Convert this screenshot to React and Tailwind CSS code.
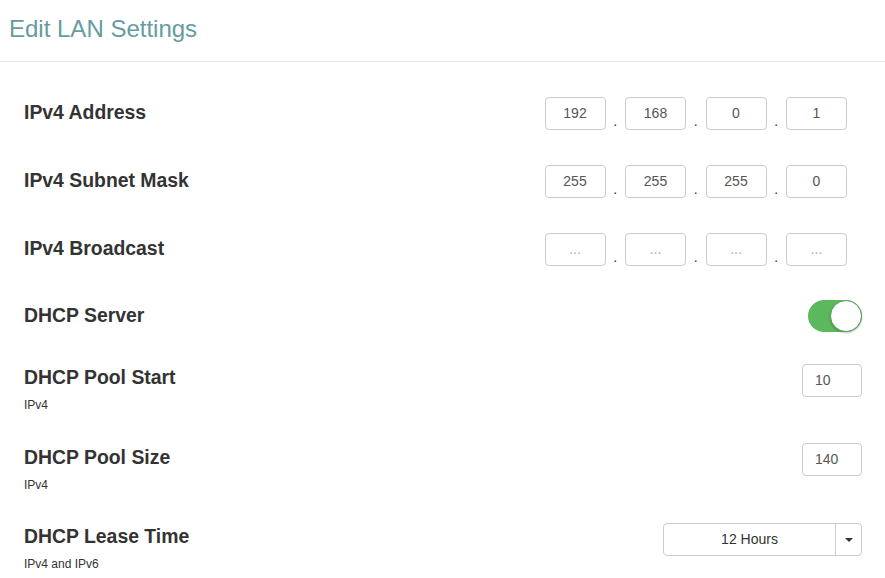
import React from 'react';

const font = { fontFamily: '"Liberation Sans", Arial, sans-serif' };

function Octets({ values, placeholder = false }) {
    return (
        <div className="flex items-end mr-[15px]">
            {values.map((v, i) => (
                <React.Fragment key={i}>
                    {i > 0 && (
                        <span className="w-[19.5px] text-center text-[14px] leading-[14px] text-[#333] pb-[2px]">.</span>
                    )}
                    <div
                        className={
                            'w-[61px] h-[33px] border border-[#ccc] rounded-[4px] flex items-center justify-center text-[14px] ' +
                            (placeholder ? 'text-[#aaa]' : 'text-[#555]')
                        }
                    >
                        {v}
                    </div>
                </React.Fragment>
            ))}
        </div>
    );
}

function Label({ title, sub, top = 4 }) {
    return (
        <div style={{ paddingTop: top }}>
            <div className="text-[19.4px] leading-[23px] font-bold text-[#333]">{title}</div>
            {sub && <div className="text-[12px] leading-[14px] text-[#333] mt-[9px]">{sub}</div>}
        </div>
    );
}

export default function App() {
    return (
        <div className="w-[885px] h-[578px] bg-white overflow-hidden" style={font}>
            <div className="h-[62px] border-b border-[#e5e5e5] px-[9px] pt-[14px]">
                <h2 className="text-[24px] leading-[29px] text-[#659c9e]">Edit LAN Settings</h2>
            </div>

            <div className="pl-6 pr-[23px] pt-[35px]">
                <div className="h-[68px] flex justify-between items-start">
                    <Label title="IPv4 Address" />
                    <Octets values={['192', '168', '0', '1']} />
                </div>
                <div className="h-[68px] flex justify-between items-start">
                    <Label title="IPv4 Subnet Mask" />
                    <Octets values={['255', '255', '255', '0']} />
                </div>
                <div className="h-[67px] flex justify-between items-start">
                    <Label title="IPv4 Broadcast" />
                    <Octets values={['...', '...', '...', '...']} placeholder />
                </div>
                <div className="h-[64px] flex justify-between items-start">
                    <Label title="DHCP Server" top={4} />
                    <div className="w-[54px] h-[32px] rounded-full bg-[#5cb85c] flex justify-end items-center">
                        <div className="w-[32px] h-[32px] rounded-full bg-white border border-[#5a9e5a] shadow-[0_1px_2px_rgba(0,0,0,0.25)]" />
                    </div>
                </div>
                <div className="h-[79px] flex justify-between items-start">
                    <Label title="DHCP Pool Start" sub="IPv4" top={2} />
                    <div className="w-[60px] h-[33px] border border-[#ccc] rounded-[4px] flex items-center pl-3 text-[14px] text-[#555]">
                        10
                    </div>
                </div>
                <div className="h-[80px] flex justify-between items-start">
                    <Label title="DHCP Pool Size" sub="IPv4" top={3} />
                    <div className="w-[60px] h-[33px] border border-[#ccc] rounded-[4px] flex items-center pl-3 text-[14px] text-[#555]">
                        140
                    </div>
                </div>
                <div className="flex justify-between items-start">
                    <Label title="DHCP Lease Time" sub="IPv4 and IPv6" top={2} />
                    <div className="w-[199px] h-[33px] border border-[#ccc] rounded-[4px] flex text-[14px] text-[#333]">
                        <div className="flex-1 flex items-center justify-center border-r border-[#ccc]">12 Hours</div>
                        <div className="w-[25px] flex items-center justify-center">
                            <span className="w-0 h-0 border-l-[4px] border-r-[4px] border-t-[4px] border-l-transparent border-r-transparent border-t-[#333]" />
                        </div>
                    </div>
                </div>
            </div>
        </div>
    );
}
